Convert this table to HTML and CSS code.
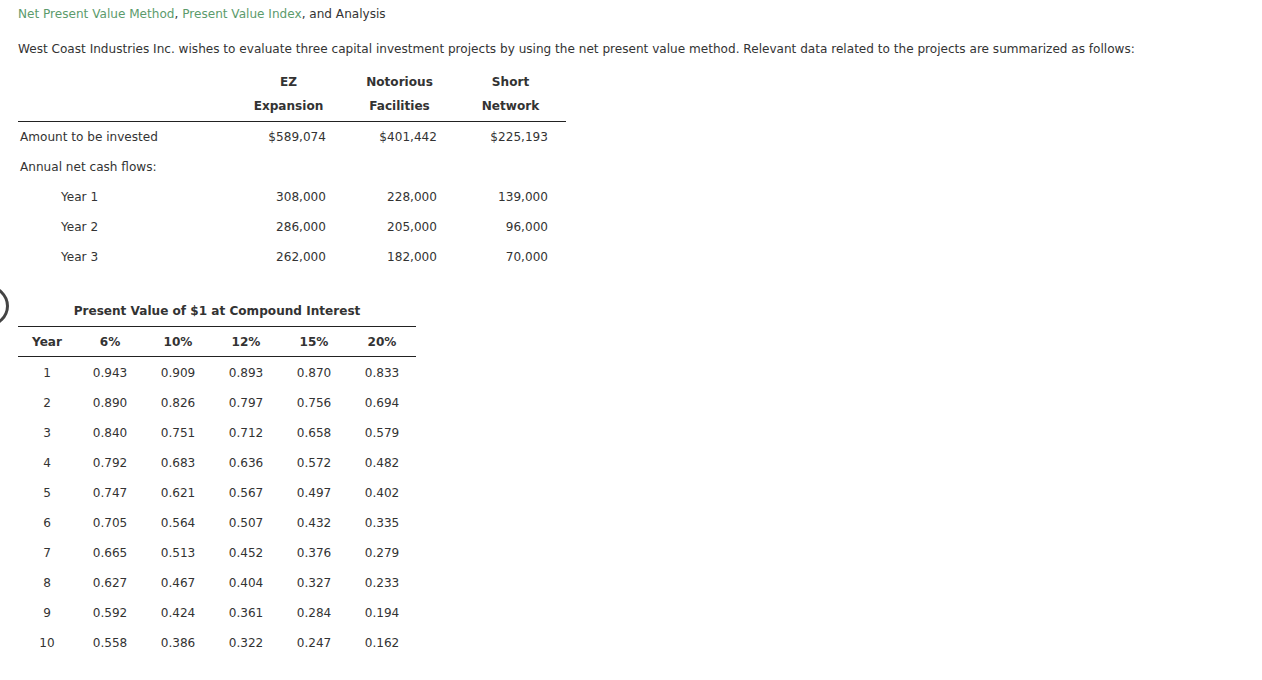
FILE: index.html
```html
<!DOCTYPE html>
<html>
<head>
<meta charset="utf-8">
<link rel="stylesheet" href="styles.css">
</head>
<body>
<div class="ring"></div>
<div class="page">
  <div class="title"><span class="link">Net Present Value Method</span>, <span class="link">Present Value Index</span>, and Analysis</div>
  <p class="intro">West Coast Industries Inc. wishes to evaluate three capital investment projects by using the net present value method. Relevant data related to the projects are summarized as follows:</p>

  <table class="projects">
    <thead>
      <tr><th class="label"></th><th>EZ<br>Expansion</th><th>Notorious<br>Facilities</th><th>Short<br>Network</th></tr>
    </thead>
    <tbody>
      <tr><td class="label">Amount to be invested</td><td class="num">$589,074</td><td class="num">$401,442</td><td class="num">$225,193</td></tr>
      <tr><td class="label">Annual net cash flows:</td><td></td><td></td><td></td></tr>
      <tr><td class="label indent">Year 1</td><td class="num">308,000</td><td class="num">228,000</td><td class="num">139,000</td></tr>
      <tr><td class="label indent">Year 2</td><td class="num">286,000</td><td class="num">205,000</td><td class="num">96,000</td></tr>
      <tr><td class="label indent">Year 3</td><td class="num">262,000</td><td class="num">182,000</td><td class="num">70,000</td></tr>
    </tbody>
  </table>

  <div class="pv-title">Present Value of $1 at Compound Interest</div>
  <table class="pv">
    <thead>
      <tr><th class="yr">Year</th><th>6%</th><th>10%</th><th>12%</th><th>15%</th><th>20%</th></tr>
    </thead>
    <tbody>
      <tr><td>1</td><td>0.943</td><td>0.909</td><td>0.893</td><td>0.870</td><td>0.833</td></tr>
      <tr><td>2</td><td>0.890</td><td>0.826</td><td>0.797</td><td>0.756</td><td>0.694</td></tr>
      <tr><td>3</td><td>0.840</td><td>0.751</td><td>0.712</td><td>0.658</td><td>0.579</td></tr>
      <tr><td>4</td><td>0.792</td><td>0.683</td><td>0.636</td><td>0.572</td><td>0.482</td></tr>
      <tr><td>5</td><td>0.747</td><td>0.621</td><td>0.567</td><td>0.497</td><td>0.402</td></tr>
      <tr><td>6</td><td>0.705</td><td>0.564</td><td>0.507</td><td>0.432</td><td>0.335</td></tr>
      <tr><td>7</td><td>0.665</td><td>0.513</td><td>0.452</td><td>0.376</td><td>0.279</td></tr>
      <tr><td>8</td><td>0.627</td><td>0.467</td><td>0.404</td><td>0.327</td><td>0.233</td></tr>
      <tr><td>9</td><td>0.592</td><td>0.424</td><td>0.361</td><td>0.284</td><td>0.194</td></tr>
      <tr><td>10</td><td>0.558</td><td>0.386</td><td>0.322</td><td>0.247</td><td>0.162</td></tr>
    </tbody>
  </table>
</div>
</body>
</html>
```

FILE: styles.css
```css
html, body {
  margin: 0;
  padding: 0;
  background: #fff;
}
body {
  font-family: "DejaVu Sans", Verdana, sans-serif;
  font-size: 12.08px;
  color: #333;
  position: relative;
}
.page {
  padding: 6px 18px 0 18px;
}
.title {
  line-height: 16px;
}
.link {
  color: #5c9b6c;
}
.intro {
  margin: 19px 0 0 0;
  line-height: 16px;
}
.projects {
  border-collapse: collapse;
  margin-top: 13px;
}
.projects th {
  font-weight: bold;
  line-height: 24px;
  padding: 0 0 3px 0;
  border-bottom: 1px solid #222;
  width: 111px;
  text-align: center;
}
.projects th.label {
  width: 215px;
}
.projects td {
  height: 30px;
  padding: 0 18px 0 0;
  vertical-align: middle;
}
.projects td.label {
  padding-left: 2px;
}
.projects td.indent {
  padding-left: 43px;
}
.projects td.num {
  text-align: right;
}
.pv-title {
  width: 398px;
  text-align: center;
  font-weight: bold;
  margin-top: 31px;
  line-height: 16px;
  padding-bottom: 7px;
}
.pv {
  border-collapse: collapse;
  border-top: 1px solid #222;
}
.pv th {
  font-weight: bold;
  height: 29px;
  padding: 0;
  border-bottom: 1px solid #222;
  width: 68px;
  text-align: center;
}
.pv th.yr {
  width: 58px;
}
.pv td {
  height: 28px;
  padding: 2px 0 0 0;
  text-align: center;
}
.ring {
  position: absolute;
  left: -35px;
  top: 285px;
  width: 38px;
  height: 36px;
  border: 3px solid #444;
  border-radius: 50%;
}
```
